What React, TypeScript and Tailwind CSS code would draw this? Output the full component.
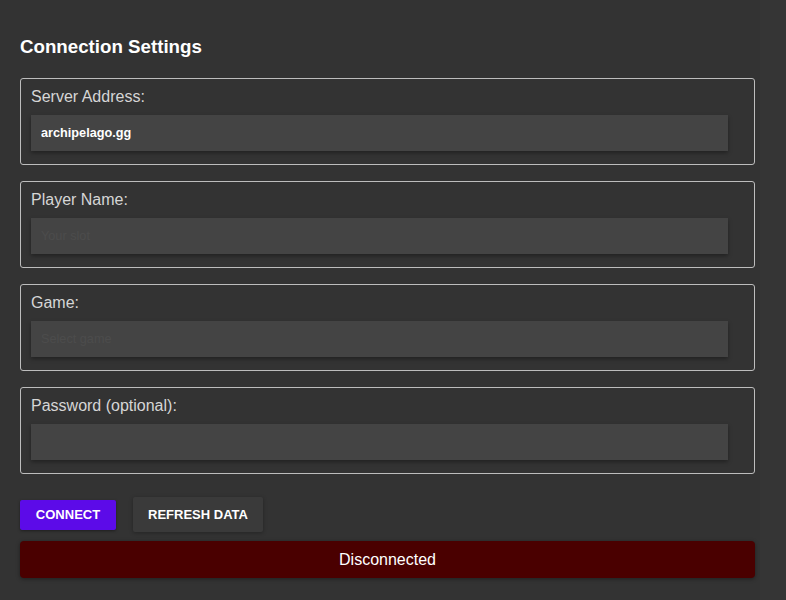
import React from "react";

const fields = [
  { label: "Server Address:", value: "archipelago.gg", placeholder: "" },
  { label: "Player Name:", value: "", placeholder: "Your slot" },
  { label: "Game:", value: "", placeholder: "Select game" },
  { label: "Password (optional):", value: "", placeholder: "" },
];

function Field({ label, value, placeholder }: { label: string; value: string; placeholder: string }) {
  return (
    <div className="border border-[#bdbdbd] rounded-[3px] pt-[9px] pb-[13px] px-[10px]">
      <label className="block text-[16px] leading-[18px] text-[#d6d6d6]">{label}</label>
      <input
        defaultValue={value}
        placeholder={placeholder}
        className="block mt-[9px] w-[697px] h-[36px] px-[10px] bg-[#444444] text-white text-[12.7px] font-bold placeholder:text-[#4c4c4c] placeholder:font-normal outline-none shadow-[0_2px_4px_rgba(0,0,0,0.35)]"
      />
    </div>
  );
}

export default function App() {
  return (
    <div className="min-h-[600px] bg-[#353535] font-['Liberation_Sans',Arial,sans-serif]">
      <div className="w-[760px] min-h-[600px] bg-[#333333] pt-[36px] px-[20px]">
        <h3 className="text-[18.72px] leading-[22px] font-bold text-white mb-[20px]">Connection Settings</h3>
        <div className="flex flex-col gap-[16px] w-[735px]">
          {fields.map((f) => (
            <Field key={f.label} {...f} />
          ))}
        </div>
        <div className="flex items-center gap-[17px] mt-[23px]">
          <button className="h-[30px] w-[96px] bg-[#5c0be8] text-white text-[13px] font-bold rounded-[2px] shadow-[0_1px_3px_rgba(0,0,0,0.4)]">
            CONNECT
          </button>
          <button className="h-[35px] w-[130px] bg-[#3a3a3a] text-white text-[13px] font-bold rounded-[2px] shadow-[0_1px_4px_rgba(0,0,0,0.3)]">
            REFRESH DATA
          </button>
        </div>
        <div className="mt-[9px] w-[735px] h-[37px] rounded-[4px] bg-[#4a0000] flex items-center justify-center text-white text-[16px] shadow-[0_1px_4px_rgba(0,0,0,0.4)]">
          Disconnected
        </div>
      </div>
    </div>
  );
}
